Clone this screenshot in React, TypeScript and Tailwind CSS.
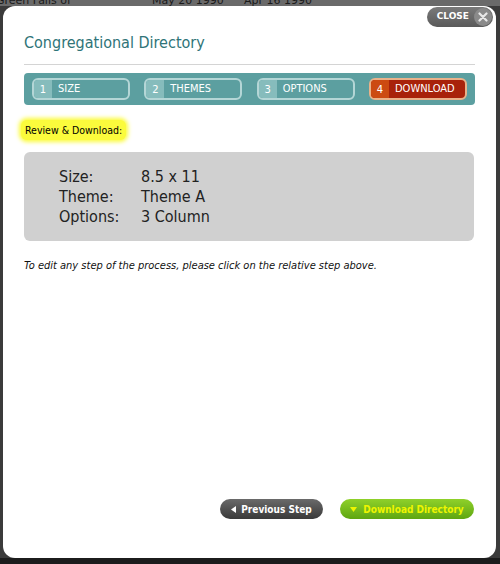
import React from "react";

const font = { fontFamily: '"DejaVu Sans", Verdana, sans-serif' };

function Step({ n, label, active }: { n: number; label: string; active?: boolean }) {
  return (
    <div
      className={
        "flex h-[22px] w-[98px] items-stretch overflow-hidden rounded-[6px] border-2 " +
        (active ? "border-[#e8b28a] bg-[#a8220a]" : "border-[#b4d6d6] bg-[#5c9fa0]")
      }
    >
      <div
        className={
          "flex w-[18px] items-center justify-center text-[10px] text-white " +
          (active ? "bg-[#cc4a12]" : "bg-[#86bcbc]")
        }
      >
        {n}
      </div>
      <div className="flex items-center pl-[6px] text-[11px] text-white [font-stretch:condensed]">
        {label}
      </div>
    </div>
  );
}

export default function App() {
  return (
    <div className="relative h-[564px] w-[500px] overflow-hidden bg-[#3b3b3b]" style={font}>
      <div className="absolute left-0 top-0 h-[6px] w-full bg-[#6a6a6a]" />
      <div className="absolute left-[-4px] top-[-7px] text-[11px] text-[#1a1a1a]">Green Falls of</div>
      <div className="absolute left-[152px] top-[-7px] text-[11px] text-[#1a1a1a]">May 20 1990</div>
      <div className="absolute left-[244px] top-[-7px] text-[11px] text-[#1a1a1a]">Apr 16 1990</div>
      <div className="absolute bottom-0 left-0 h-[6px] w-full bg-[#1c1c1c]" />
      <div className="relative ml-[3px] mt-[6px] flex h-[552px] w-[493px] flex-col rounded-[12px] bg-white px-[21px]">
        <div className="absolute right-[3px] top-[1px] flex h-[20px] items-center rounded-full bg-gradient-to-b from-[#7a7a7a] to-[#5a5a5a] pl-[10px] pr-[1px]">
          <span className="text-[9px] font-bold text-white">CLOSE</span>
          <span className="ml-[5px] flex h-[18px] w-[18px] items-center justify-center rounded-full bg-[#8a8a8a]">
            <svg width="10" height="10" viewBox="0 0 10 10">
              <path d="M1.5 1.5 L8.5 8.5 M8.5 1.5 L1.5 8.5" stroke="#e8e8e8" strokeWidth="2.2" strokeLinecap="round" />
            </svg>
          </span>
        </div>
        <div className="pt-[27px] text-[16px] leading-[20px] text-[#2f7478] [font-stretch:condensed]">
          Congregational Directory
        </div>
        <div className="mt-[11px] h-px w-[451px] bg-[#d4d4d4]" />
        <div className="mt-[8px] flex h-[32px] w-[451px] items-center justify-between rounded-[4px] bg-[#5c9fa0] px-[8px]">
          <Step n={1} label="SIZE" />
          <Step n={2} label="THEMES" />
          <Step n={3} label="OPTIONS" />
          <Step n={4} label="DOWNLOAD" active />
        </div>
        <div className="-ml-[3px] mt-[15px] self-start rounded-[6px] bg-[#fbfb3c] px-[4px] py-[3px] text-[10.5px] leading-[14px] text-black shadow-[0_0_4px_2px_#fbfb3c] [font-stretch:condensed]">
          Review &amp; Download:
        </div>
        <div className="mt-[12px] flex h-[89px] w-[450px] flex-col justify-center rounded-[6px] bg-[#d0d0d0] pl-[35px] text-[16px] leading-[20px] text-[#222] [font-stretch:condensed]">
          <div className="flex"><span className="w-[82px]">Size:</span><span>8.5 x 11</span></div>
          <div className="flex"><span className="w-[82px]">Theme:</span><span>Theme A</span></div>
          <div className="flex"><span className="w-[82px]">Options:</span><span>3 Column</span></div>
        </div>
        <div className="mt-[18px] text-[11px] italic leading-[14px] text-[#111] [font-stretch:condensed]">
          To edit any step of the process, please click on the relative step above.
        </div>
        <div className="mb-[39px] mt-auto flex justify-end gap-[17px] pr-[1px]">
          <div className="flex h-[20px] w-[103px] items-center justify-center gap-[5px] rounded-full bg-gradient-to-b from-[#6a6a6a] to-[#3a3a3a] text-[10px] font-bold text-white [font-stretch:condensed]">
            <svg width="5" height="7" viewBox="0 0 5 7"><path d="M5 0 L0 3.5 L5 7 Z" fill="#fff" /></svg>
            Previous Step
          </div>
          <div className="flex h-[20px] w-[134px] items-center justify-center gap-[6px] rounded-full bg-gradient-to-b from-[#8fd12a] to-[#5ea610] text-[10px] font-bold text-[#eef500] [font-stretch:condensed]">
            <svg width="7" height="5" viewBox="0 0 7 5"><path d="M0 0 L7 0 L3.5 5 Z" fill="#eef500" /></svg>
            Download Directory
          </div>
        </div>
      </div>
    </div>
  );
}
